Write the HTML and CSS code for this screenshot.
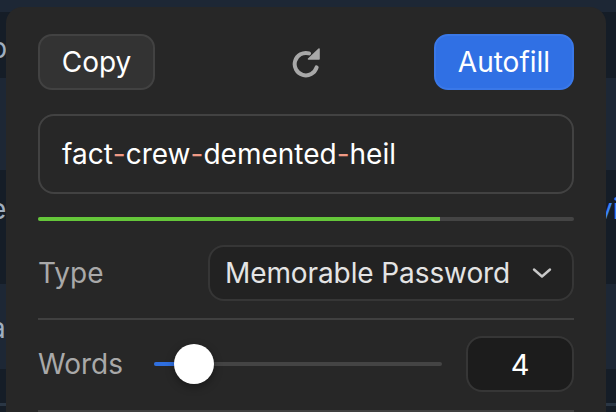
FILE: index.html
```html
<!DOCTYPE html>
<html lang="en">
<head>
<meta charset="utf-8">
<title>Password generator</title>
<link rel="stylesheet" href="styles.css">
</head>
<body>
<div class="backdrop">
  <div class="bg-row bg-top"></div>
  <div class="bg-row bg-a"><span class="edge-l edge-b">b</span></div>
  <div class="bg-row bg-b"></div>
  <div class="bg-row bg-c"><span class="edge-l edge-e">e</span><span class="edge-r">vi</span></div>
  <div class="bg-row bg-d"><span class="edge-l edge-a">a</span></div>
  <div class="bg-row bg-e"><div class="bg-line"></div></div>
</div>
<main class="panel">
  <div class="actions">
    <button class="btn btn-copy">Copy</button>
    <svg class="refresh" viewBox="0 0 32 32" width="32" height="32" aria-hidden="true">
      <path d="M24.6 21.4A11.2 11.2 0 1 1 17 7.4" fill="none" stroke="#a8a8a8" stroke-width="4" stroke-linecap="round"/>
      <path d="M27 3V13H16.5Z" fill="#a8a8a8" stroke="#a8a8a8" stroke-width="1.6" stroke-linejoin="round"/>
    </svg>
    <button class="btn btn-fill">Autofill</button>
  </div>
  <div class="password">fact<span class="dash">-</span>crew<span class="dash">-</span>demented<span class="dash">-</span>heil</div>
  <div class="strength"><div class="strength-fill"></div></div>
  <div class="row row-type">
    <span class="label">Type</span>
    <div class="select">
      <span class="select-text">Memorable Password</span>
      <svg class="chev" viewBox="0 0 20 12" width="20" height="12" aria-hidden="true"><path d="M2 2.5L10 9.5L18 2.5" fill="none" stroke="#c8c8c8" stroke-width="2.4" stroke-linecap="round" stroke-linejoin="round"/></svg>
    </div>
  </div>
  <div class="row row-words">
    <span class="label">Words</span>
    <div class="slider"><div class="slider-fill"></div><div class="thumb"></div></div>
    <div class="count">4</div>
  </div>
</main>
</body>
</html>
```
FILE: styles.css
```css
* { box-sizing: border-box; }
html, body { margin: 0; height: 100%; }
body {
  width: 616px;
  height: 412px;
  position: relative;
  overflow: hidden;
  background: #151d27;
  font-family: Inter, "Liberation Sans", sans-serif;
}
.backdrop { position: absolute; inset: 0; display: flex; flex-direction: column; }
.bg-row { position: relative; font-size: 28px; line-height: 34px; color: #a0aebf; }
.bg-top { height: 12px; background: #1d2735; }
.bg-a { height: 66px; background: #151d27; }
.bg-b { height: 92px; background: #1d2735; }
.bg-c { height: 114px; background: #151d27; }
.bg-d { height: 85px; background: #1d2735; }
.bg-e { flex: 1; background: #151d27; }
.bg-line { margin-top: 34px; height: 3px; background: #2a3644; }
.edge-l { position: absolute; left: -10px; }
.edge-b { top: 19px; }
.edge-e { top: 22px; }
.edge-a { top: 27px; }
.edge-r { position: absolute; left: 597px; top: 22px; color: #3b82f6; }
.panel {
  position: absolute;
  left: 6px;
  top: 7px;
  width: 600px;
  height: 420px;
  padding: 27px 32px 0;
  background: #272727;
  border-radius: 16px;
  color: #fff;
}
.actions { display: flex; align-items: center; justify-content: space-between; height: 56px; }
.btn {
  height: 56px;
  border-radius: 14px;
  font: 400 28px Inter, "Liberation Sans", sans-serif;
  color: #fff;
  padding: 0;
}
.btn-copy { width: 117px; background: #333; border: 2px solid #424242; }
.btn-fill { width: 140px; background: #3070e4; border: 2px solid #3a78e8; }
.refresh { margin-left: 26px; }
.password {
  margin-top: 24px;
  height: 80px;
  border: 2px solid #424242;
  border-radius: 16px;
  padding: 0 22px;
  display: flex;
  align-items: center;
  font-size: 28px;
  white-space: pre;
}
.dash { color: #ef9a85; }
.strength { margin-top: 23px; height: 4px; border-radius: 2px; background: #444; overflow: hidden; }
.strength-fill { width: 75%; height: 100%; background: #65c73a; }
.row { display: flex; align-items: center; border-bottom: 2px solid #404040; }
.row-type { margin-top: 24px; padding-bottom: 17px; }
.row-words { padding: 16px 0 18px; }
.label { font-size: 28px; color: #a9a9a9; }
.select {
  margin-left: auto;
  width: 366px;
  height: 56px;
  border: 2px solid #363636;
  border-radius: 16px;
  background: #222;
  color: #e4e4e4;
  font-size: 28px;
  display: flex;
  align-items: center;
  justify-content: space-between;
  padding: 0 20px 0 15px;
}
.select-text { letter-spacing: -0.1px; }
.slider { position: relative; width: 288px; height: 4px; margin-left: 31px; border-radius: 2px; background: #444; }
.slider-fill { width: 30px; height: 100%; border-radius: 2px; background: #2f6fe0; }
.thumb {
  position: absolute;
  left: 20px;
  top: -18px;
  width: 40px;
  height: 40px;
  border-radius: 50%;
  background: #fff;
  box-shadow: 0 3px 8px rgba(0,0,0,.35);
}
.count {
  margin-left: auto;
  width: 108px;
  height: 56px;
  border: 2px solid #363636;
  border-radius: 16px;
  background: #1c1c1c;
  display: flex;
  align-items: center;
  justify-content: center;
  font-size: 29px;
  font-weight: 400;
}
```
